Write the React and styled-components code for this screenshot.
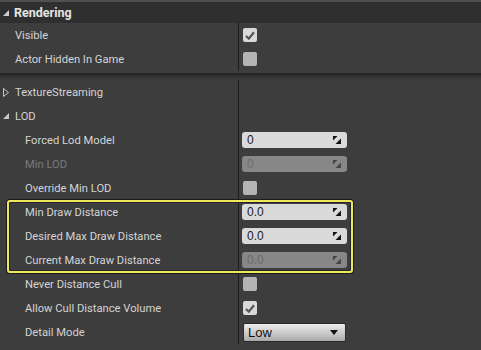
import React from 'react';
import styled, { createGlobalStyle } from 'styled-components';

const GlobalStyle = createGlobalStyle`
  html, body {
    margin: 0;
    padding: 0;
    background: #3d3d3d;
    overflow: hidden;
  }
  body {
    font-family: Roboto, "Noto Sans", sans-serif;
  }
`;

const Panel = styled.div`
  width: 481px;
  height: 350px;
  background: #3d3d3d;
  border-top: 2px solid #4f4f4f;
  box-sizing: border-box;
  overflow: hidden;
`;

const CategoryHeader = styled.div`
  height: 21px;
  background: #2f2f2f;
  display: flex;
  align-items: center;
  gap: 5px;
  padding-left: 3px;
  color: #e4e4e4;
  font-size: 12.5px;
  font-weight: 700;
`;

const Section = styled.div`
  position: relative;
`;

const SectionGap = styled.div`
  height: 9px;
  display: flex;
  flex-direction: column;
  &::before {
    content: '';
    height: 2px;
    margin-top: 2px;
    background: #262626;
  }
  &::after {
    content: '';
    flex: 1;
    background: linear-gradient(#2c2c2c, #3d3d3d);
  }
`;

const Row = styled.div`
  height: 24px;
  display: grid;
  grid-template-columns: 238px 1fr;
`;

const NameCell = styled.div`
  display: flex;
  align-items: center;
  gap: 6px;
  padding-left: ${p => p.$indent}px;
  font-size: 11.2px;
  color: ${p => (p.$disabled ? '#7b7b7b' : '#d4d4d4')};
  white-space: nowrap;
`;

const ValueCell = styled.div`
  border-left: 1px solid #1c1c1c;
  display: flex;
  align-items: center;
  padding-left: 3px;
`;

const Check = styled.div`
  width: 14px;
  height: 14px;
  margin-left: 1px;
  border-radius: 2px;
  background: ${p => (p.$checked ? '#d9d9d9' : '#b4b4b4')};
  display: flex;
  align-items: center;
  justify-content: center;
`;

const NumBox = styled.div`
  width: 105px;
  height: 16px;
  border-radius: 3px;
  background: ${p => (p.$disabled ? '#878787' : '#dadada')};
  color: ${p => (p.$disabled ? '#6b6b6b' : '#1a1a1a')};
  font-family: "Liberation Sans", Arial, sans-serif;
  font-size: 12px;
  display: flex;
  align-items: center;
  justify-content: space-between;
  padding: 0 6px 0 5px;
  box-sizing: border-box;
`;

const Combo = styled.div`
  width: 103px;
  height: 19px;
  margin-left: 1px;
  margin-top: 1px;
  border-radius: 2px;
  background: linear-gradient(#ececec, #c9c9c9 55%, #a9a9a9);
  border: 1px solid #2a2a2a;
  box-sizing: border-box;
  color: #111;
  font-family: "Liberation Sans", Arial, sans-serif;
  font-size: 13px;
  display: flex;
  align-items: center;
  justify-content: space-between;
  padding: 0 7px 0 4px;
`;

const Highlight = styled.div`
  position: absolute;
  left: 7px;
  top: 120px;
  width: 346px;
  height: 73px;
  box-sizing: border-box;
  border: 2px solid #efe85c;
  border-radius: 3px;
  box-shadow: 0 0 0 1px #1b1b1b, inset 0 0 0 1px #262626;
  pointer-events: none;
`;

const Tri = ({ open, color = '#c8c8c8' }) =>
  open ? (
    <svg width="6" height="6" viewBox="0 0 6 6">
      <polygon points="6,0 6,6 0,6" fill={color} />
    </svg>
  ) : (
    <svg width="6" height="9" viewBox="0 0 6 9">
      <polygon points="0.5,0.5 5.5,4.5 0.5,8.5" fill="none" stroke={color} strokeWidth="1" />
    </svg>
  );

const Tick = () => (
  <svg width="10" height="9" viewBox="0 0 10 9">
    <path d="M1 5 L3.8 7.6 L9 1.2" fill="none" stroke="#555" strokeWidth="2.2" />
  </svg>
);

const Spin = ({ dim }) => (
  <svg width="8" height="8" viewBox="0 0 8 8">
    <polygon points="0,0 4.5,0 0,4.5" fill={dim ? '#444' : '#111'} />
    <polygon points="8,2.5 8,8 2.5,8" fill={dim ? '#444' : '#111'} />
  </svg>
);

const Caret = () => (
  <svg width="8" height="5" viewBox="0 0 8 5">
    <polygon points="0,0 8,0 4,5" fill="#111" />
  </svg>
);

function Prop({ name, indent = 25, disabled, children }) {
  return (
    <Row>
      <NameCell $indent={indent} $disabled={disabled}>{name}</NameCell>
      <ValueCell>{children}</ValueCell>
    </Row>
  );
}

function Group({ name, open }) {
  return (
    <Row>
      <NameCell $indent={3}>
        <Tri open={open} />
        {name}
      </NameCell>
      <ValueCell />
    </Row>
  );
}

const Num = ({ value, disabled }) => (
  <NumBox $disabled={disabled}>
    <span>{value}</span>
    <Spin dim={disabled} />
  </NumBox>
);

export default function App() {
  return (
    <Panel>
      <GlobalStyle />
      <CategoryHeader>
        <Tri open color="#cfcfcf" />
        Rendering
      </CategoryHeader>
      <Section>
        <Prop name="Visible" indent={15}>
          <Check $checked><Tick /></Check>
        </Prop>
        <Prop name="Actor Hidden In Game" indent={15}>
          <Check />
        </Prop>
      </Section>
      <SectionGap />
      <Section>
        <Group name="TextureStreaming" />
        <Group name="LOD" open />
        <Prop name="Forced Lod Model"><Num value="0" /></Prop>
        <Prop name="Min LOD" disabled><Num value="0" disabled /></Prop>
        <Prop name="Override Min LOD"><Check /></Prop>
        <Prop name="Min Draw Distance"><Num value="0.0" /></Prop>
        <Prop name="Desired Max Draw Distance"><Num value="0.0" /></Prop>
        <Prop name="Current Max Draw Distance"><Num value="0.0" disabled /></Prop>
        <Prop name="Never Distance Cull"><Check /></Prop>
        <Prop name="Allow Cull Distance Volume">
          <Check $checked><Tick /></Check>
        </Prop>
        <Prop name="Detail Mode">
          <Combo>
            <span>Low</span>
            <Caret />
          </Combo>
        </Prop>
        <Highlight />
      </Section>
    </Panel>
  );
}
